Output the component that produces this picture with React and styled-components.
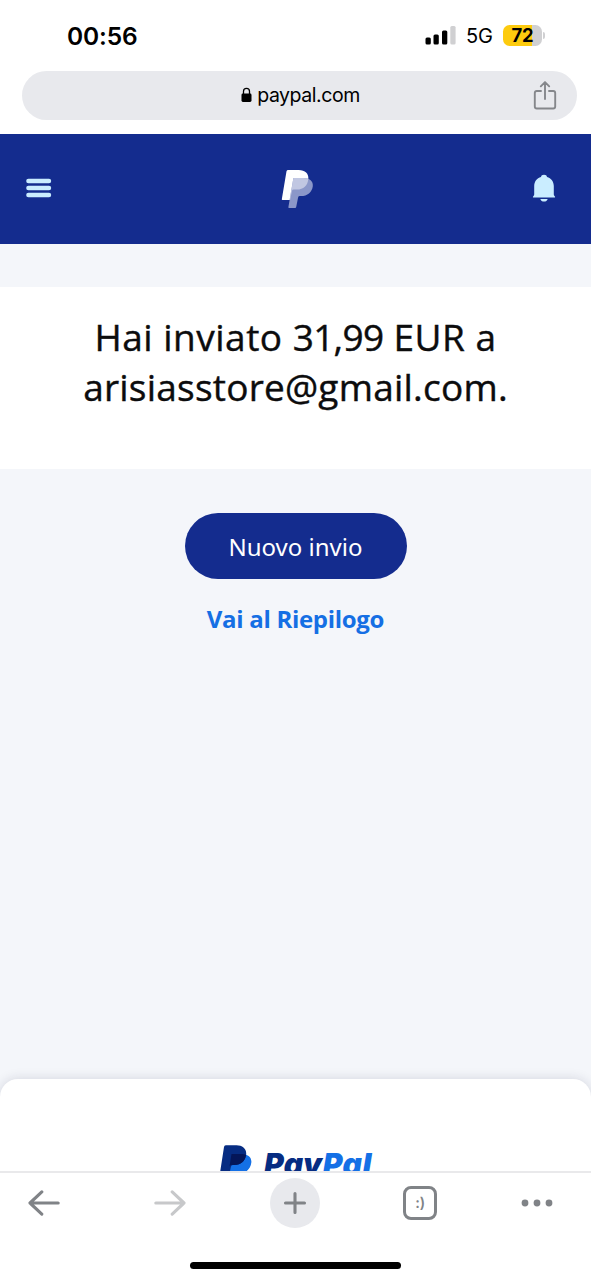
import React from "react";
import styled, { createGlobalStyle } from "styled-components";

const Global = createGlobalStyle`
  * { box-sizing: border-box; }
  body { margin: 0; background: #fff; }
  button { border: 0; padding: 0; background: none; }
  svg { display: block; flex: none; }
`;

const Screen = styled.div`
  width: 591px;
  height: 1280px;
  display: flex;
  flex-direction: column;
  overflow: hidden;
  background: #fff;
  font-family: Inter, "Liberation Sans", sans-serif;
  color: #000;
`;

const StatusBar = styled.div`
  height: 71px;
  flex: none;
  display: flex;
  justify-content: space-between;
  padding: 22px 46px 0 67px;
`;

const Clock = styled.div`
  font-size: 24.5px;
  line-height: 28px;
  font-weight: 600;
  letter-spacing: -0.15px;
`;

const StatusIcons = styled.div`
  display: flex;
  height: 26px;
  align-items: center;
`;

const Network = styled.span`
  margin: 2px 0 0 10px;
  width: 37px;
  font-size: 20px;
  line-height: 26px;
  letter-spacing: -0.1px;
`;

const Battery = styled.div`
  width: 39px;
  height: 21px;
  border-radius: 6.5px;
  background: linear-gradient(90deg, #fdcb0e 0 29px, #d0d0d2 29px);
  font-size: 18.5px;
  line-height: 21px;
  font-weight: 700;
  text-align: center;
  letter-spacing: -0.3px;
`;

const BatteryTip = styled.div`
  width: 2px;
  height: 7px;
  margin-left: 1px;
  border-radius: 0 2px 2px 0;
  background: #d0d0d2;
`;

const AddressArea = styled.div`
  height: 63px;
  flex: none;
  padding: 0 14px 0 22px;
`;

const AddressBar = styled.div`
  height: 49px;
  border-radius: 25px;
  background: #e8e9ed;
  display: grid;
  grid-template-columns: 1fr auto 1fr;
  align-items: center;
  padding: 0 20px 0 22px;
`;

const Address = styled.div`
  grid-column: 2;
  display: flex;
  align-items: center;
  gap: 5px;
  padding-bottom: 2px;
  font-size: 19.5px;
  line-height: 24px;
  letter-spacing: -0.45px;
`;

const ShareButton = styled.button`
  justify-self: end;
`;

const Header = styled.header`
  height: 110px;
  flex: none;
  display: grid;
  grid-template-columns: 254.5px 33px 1fr;
  align-items: center;
  padding: 0 35px 0 26px;
  background: #142c8e;
  > :last-child { justify-self: end; }
`;

const Page = styled.main`
  flex: 1;
  min-height: 0;
  padding-top: 43px;
  display: flex;
  flex-direction: column;
  background: #f4f6fa;
`;

const Confirmation = styled.section`
  height: 182px;
  flex: none;
  padding-top: 25px;
  background: #fff;
`;

const Title = styled.h1`
  margin: 0;
  font-family: "Open Sans", sans-serif;
  font-size: 37px;
  line-height: 50px;
  font-weight: 400;
  color: #0c0c0d;
  -webkit-text-stroke: 0.4px #0c0c0d;
  text-align: center;
`;

const TitleLine = styled.span`
  display: block;
  letter-spacing: ${(p) => p.$tracking}px;
`;

const Amount = styled.span`
  letter-spacing: -0.7px;
`;

const Actions = styled.div`
  flex: 1;
  display: flex;
  flex-direction: column;
  align-items: center;
  padding-top: 44px;
`;

const PrimaryButton = styled.button`
  width: 222px;
  height: 66px;
  padding-top: 2px;
  border-radius: 33px;
  background: #142c8e;
  color: #fff;
  font-family: "Noto Sans", sans-serif;
  font-size: 24px;
  line-height: 32px;
`;

const SummaryLink = styled.a`
  margin-top: 24px;
  font-family: "Open Sans", sans-serif;
  font-size: 24px;
  line-height: 32px;
  font-weight: 700;
  letter-spacing: -0.3px;
  color: #156fe4;
`;

const Footer = styled.footer`
  height: 92px;
  flex: none;
  overflow: hidden;
  display: flex;
  align-items: flex-start;
  padding: 66px 0 0 219px;
  border-radius: 18px 18px 0 0;
  background: #fff;
  box-shadow: 0 0 12px rgba(30, 30, 60, 0.15);
`;

const Wordmark = styled.div`
  margin: 1px 0 0 12px;
  font-size: 30px;
  line-height: 36px;
  font-weight: 900;
  font-style: italic;
  letter-spacing: 0.5px;
  font-feature-settings: "cv11";
  color: #062c82;
  span { color: #1470e6; }
`;

const Toolbar = styled.nav`
  height: 109px;
  flex: none;
  border-top: 2px solid #e9e9eb;
  background: #fff;
  display: flex;
  flex-direction: column;
  align-items: center;
`;

const ToolRow = styled.div`
  width: 100%;
  height: 59px;
  display: flex;
  align-items: center;
  justify-content: space-between;
  padding: 0 38px 0 28px;
`;

const ForwardButton = styled.button`
  margin-left: 10px;
`;

const NewTab = styled.button`
  width: 50px;
  height: 50px;
  display: grid;
  place-items: center;
  border-radius: 50%;
  background: #e8e9ed;
`;

const Tabs = styled.button`
  width: 34px;
  height: 34px;
  border: 3px solid #808387;
  border-radius: 8px;
  color: #808387;
  font-family: Inter, sans-serif;
  font-size: 14.5px;
  line-height: 27px;
  font-weight: 600;
`;

const HomeIndicator = styled.div`
  width: 211px;
  height: 7px;
  margin-top: 30px;
  border-radius: 4px;
  background: #000;
`;

const Signal = () => (
  <svg width="31" height="20" viewBox="0 0 31 20">
    <rect x="0.5" y="12.5" width="5.3" height="7" rx="1.5" />
    <rect x="8.5" y="9.5" width="5.3" height="10" rx="1.5" />
    <rect x="17" y="5.5" width="5.3" height="14" rx="1.5" />
    <rect x="25.3" y="1" width="5.3" height="18.5" rx="1.5" fill="#d0d0d2" />
  </svg>
);

const Lock = () => (
  <svg width="11" height="16" viewBox="0 0 11 16">
    <rect x="0.5" y="6.5" width="10" height="8.5" rx="1.4" />
    <path d="M2.5 7V4.3a3 3 0 0 1 6 0V7" fill="none" stroke="#000" strokeWidth="1.3" />
  </svg>
);

const Share = () => (
  <svg width="24" height="32" viewBox="0 0 24 32" fill="none" stroke="#85878b" strokeWidth="1.9" strokeLinecap="round" strokeLinejoin="round">
    <path d="M8 11H3.8Q1.8 11 1.8 13V26.5Q1.8 28.5 3.8 28.5H20.2Q22.2 28.5 22.2 26.5V13Q22.2 11 20.2 11H16M12 19V2.2M7.8 6.3 12 2.1l4.2 4.2" />
  </svg>
);

const Menu = () => (
  <svg width="26" height="22" viewBox="0 0 26 22" fill="#caedff">
    <rect x="0.2" y="0.7" width="25" height="4.6" rx="2.2" />
    <rect x="0.2" y="7.7" width="25" height="4.6" rx="2.2" />
    <rect x="0.2" y="14.7" width="25" height="4.6" rx="2.2" />
  </svg>
);

const HeaderLogo = () => (
  <svg width="33" height="40" viewBox="0 0 33 40">
    <path d="M7.2 1H17.7C24 1 28 4.8 27.3 10C27 12.5 26 15 24.5 17L11 22L9.1 31H1.4Q.7 31 .8 30.2L5.5 2.3Q5.8 1 7.2 1Z" fill="#fff" />
    <path d="M12.4 9H22.4C28.6 9 32.4 12.2 31.8 17.3C31 23.4 26.4 27.1 20 27.1H18.8Q17.4 27.1 17.1 28.5L15.2 38Q15 39 14.1 39H8Q7.2 39 7.4 38Z" fill="#8b97c9" />
    <path d="M12.4 9H22.4Q25.4 9 27.3 10C26.8 16.5 22.4 20.6 16 20.6H12.8Q11.2 20.6 10.9 22L9.1 31H8.6Z" fill="#c1c7e2" />
  </svg>
);

const Bell = () => (
  <svg width="24" height="30" viewBox="0 0 24 30" fill="#caedff">
    <path d="M12 .8C13.8.8 14.8 1.6 15 3C19.2 4.2 21.8 7.8 21.8 12V20.4Q21.8 21.3 22.5 21.9Q24 23.4 22 23.4H2Q0 23.4 1.5 21.9Q2.2 21.3 2.2 20.4V12C2.2 7.8 4.8 4.2 9 3C9.2 1.6 10.2.8 12 .8Z" />
    <path d="M8.3 25H15.7C15 28.4 9 28.4 8.3 25Z" />
  </svg>
);

const FooterLogo = () => (
  <svg width="33" height="39" viewBox="0 0 33 39">
    <path d="M11.5 9H22.5C28.8 9 33 12.2 32.3 17.8C31.5 24 26.7 28.5 20.5 28.5H17Q15.5 28.5 15.2 30L13.7 37.5H6.5Z" fill="#1470e6" />
    <path d="M6.8 .3H17.5C23.8 .3 28 4.2 27.1 9.9C26.1 16.3 21.5 20 15.3 20H13.8Q12.3 20 12 21.5L10 30.5H0.6L5 2Q5.2 .3 6.8 .3Z" fill="#062c82" />
    <path d="M12.5 9H23Q25.3 9 27.1 10C26.1 16.3 21.5 20 15.3 20H12.3Q10.8 20 10.5 21.5Z" fill="#041659" />
  </svg>
);

const Arrow = ({ forward }) => (
  <svg width="32" height="28" viewBox="0 0 32 28" fill="none" stroke={forward ? "#c7c8ca" : "#808387"} strokeWidth="3.1" strokeLinecap="round" strokeLinejoin="round">
    <path d={forward ? "M1.8 14H30M18.2 2.9 30 14 18.2 25.1" : "M30.2 14H2M13.8 2.9 2 14 13.8 25.1"} />
  </svg>
);

const Plus = () => (
  <svg width="24" height="24" viewBox="0 0 24 24" stroke="#808387" strokeWidth="3.1" strokeLinecap="round">
    <path d="M12 2.5V21.5M2.5 12H21.5" />
  </svg>
);

const More = () => (
  <svg width="32" height="8" viewBox="0 0 32 8" fill="#808387">
    <circle cx="4" cy="4" r="3.4" />
    <circle cx="16" cy="4" r="3.4" />
    <circle cx="28" cy="4" r="3.4" />
  </svg>
);

export default function App() {
  return (
    <Screen>
      <Global />
      <StatusBar>
        <Clock>00:56</Clock>
        <StatusIcons>
          <Signal />
          <Network>5G</Network>
          <Battery>72</Battery>
          <BatteryTip />
        </StatusIcons>
      </StatusBar>
      <AddressArea>
        <AddressBar>
          <Address>
            <Lock />
            <span>paypal.com</span>
          </Address>
          <ShareButton aria-label="Condividi"><Share /></ShareButton>
        </AddressBar>
      </AddressArea>
      <Header>
        <Menu />
        <HeaderLogo />
        <Bell />
      </Header>
      <Page>
        <Confirmation>
          <Title>
            <TitleLine $tracking={0.5}>Hai inviato <Amount>31,99</Amount> EUR a</TitleLine>
            <TitleLine $tracking={0.22}>arisiasstore@gmail.com.</TitleLine>
          </Title>
        </Confirmation>
        <Actions>
          <PrimaryButton>Nuovo invio</PrimaryButton>
          <SummaryLink>Vai al Riepilogo</SummaryLink>
        </Actions>
        <Footer>
          <FooterLogo />
          <Wordmark>Pay<span>Pal</span></Wordmark>
        </Footer>
      </Page>
      <Toolbar>
        <ToolRow>
          <Arrow />
          <ForwardButton aria-label="Avanti"><Arrow forward /></ForwardButton>
          <NewTab aria-label="Nuova scheda"><Plus /></NewTab>
          <Tabs>:)</Tabs>
          <More />
        </ToolRow>
        <HomeIndicator />
      </Toolbar>
    </Screen>
  );
}
